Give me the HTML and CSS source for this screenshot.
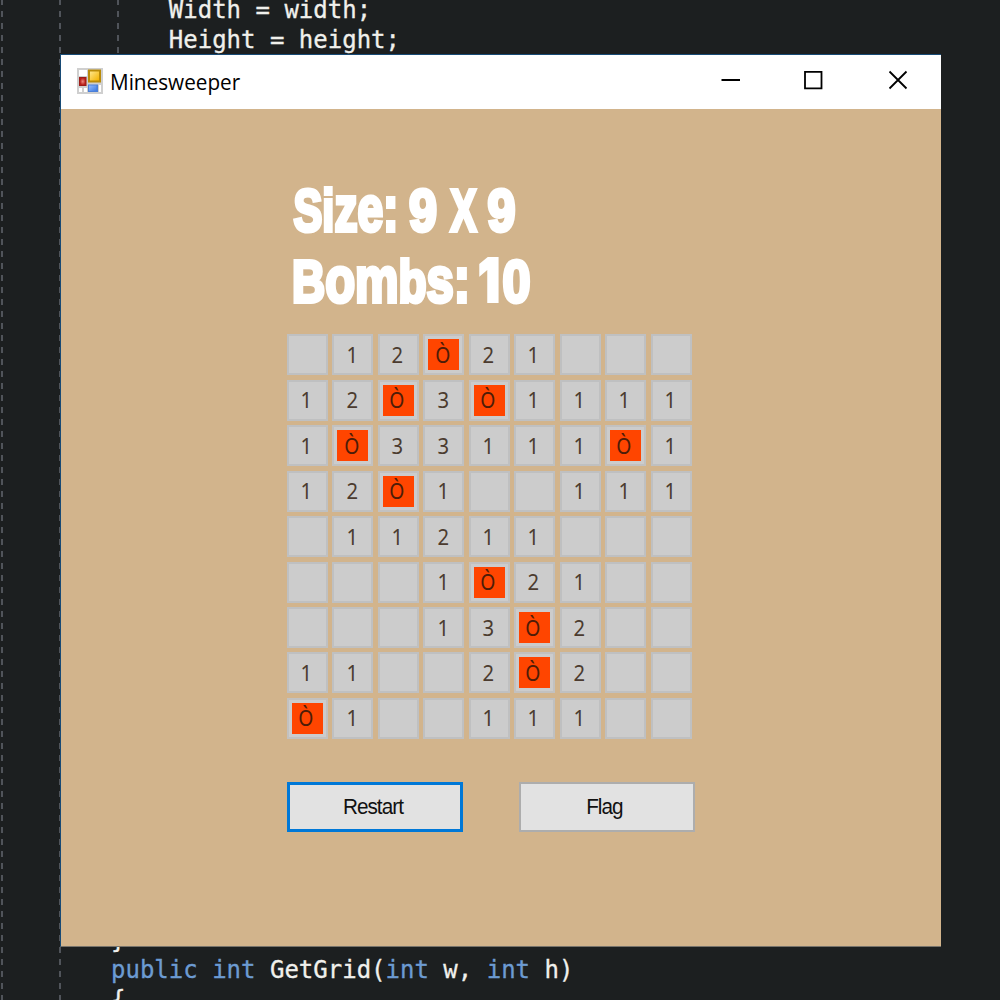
FILE: index.html
```
<!DOCTYPE html>
<html lang="en">
<head>
<meta charset="utf-8">
<title>Minesweeper</title>
<link rel="stylesheet" href="styles.css">
</head>
<body>
<div class="desktop">
  <div class="editor">
    <pre class="code code-top">    Width = width;
    Height = height;</pre>
    <pre class="code code-bottom">}
<span class="kw">public</span> <span class="kw">int</span> GetGrid(<span class="kw">int</span> w, <span class="kw">int</span> h)
{</pre>
    <i class="guide guide-1"></i><i class="guide guide-2"></i><i class="guide guide-3"></i>
  </div>
  <main class="window">
    <header class="titlebar">
      <svg class="app-icon" width="26" height="26" viewBox="0 0 26 26">
        <defs>
          <linearGradient id="gold" x1="0" y1="0" x2="1" y2="1"><stop offset="0" stop-color="#ffe68a"/><stop offset="1" stop-color="#f3b300"/></linearGradient>
          <radialGradient id="red"><stop offset="0" stop-color="#ef8a80"/><stop offset="1" stop-color="#b81f1a"/></radialGradient>
          <linearGradient id="blue" x1="0" y1="0" x2="1" y2="1"><stop offset="0" stop-color="#91b9ff"/><stop offset="1" stop-color="#3f7be0"/></linearGradient>
        </defs>
        <rect width="26" height="26" fill="#cfcfcf"/>
        <path fill="#fff" d="M2 2h8v6H2zM2 20h3v4H2zM7 20h3v4H7zM22 17h2v7h-2z"/>
        <rect x="11" y="1.500" width="13" height="13" fill="#b98b08"/>
        <rect x="13" y="3.500" width="9" height="9" fill="url(#gold)"/>
        <rect x="2" y="9" width="7.500" height="9" fill="#9c1c18"/>
        <rect x="3" y="10" width="5.500" height="7" fill="url(#red)"/>
        <rect x="11" y="16.500" width="10" height="7.500" fill="#4a7fd8"/>
        <rect x="12" y="17.500" width="7.500" height="5.500" fill="url(#blue)"/>
      </svg>
      <span class="title">Minesweeper</span>
      <svg class="controls" width="190" height="24" viewBox="0 0 190 24" fill="none" stroke="#000" stroke-width="1.800">
        <path d="M2.500 12H21M86 3.800h16.500v16.500H86zM170.500 3.500l17 17M187.500 3.500l-17 17"/>
      </svg>
    </header>
    <section class="client">
      <svg class="stats" width="250" height="130" viewBox="0 0 250 130" fill="#fff">
        <text x="6.500" y="53" textLength="105" lengthAdjust="spacingAndGlyphs">Si<tspan class="low">ze:</tspan></text>
        <text x="122" y="53" textLength="28" lengthAdjust="spacingAndGlyphs">9</text>
        <text x="163.500" y="53" textLength="26" lengthAdjust="spacingAndGlyphs">X</text>
        <text x="200.500" y="53" textLength="28" lengthAdjust="spacingAndGlyphs">9</text>
        <text x="5" y="124" textLength="178" lengthAdjust="spacingAndGlyphs">B<tspan class="low">om</tspan>b<tspan class="low">s:</tspan></text>
        <text class="one" x="191" y="123.500" textLength="22" lengthAdjust="spacingAndGlyphs">1</text>
        <text x="215.500" y="124" textLength="28" lengthAdjust="spacingAndGlyphs">0</text>
      </svg>
      <div class="board" id="board"></div>
      <div class="actions">
        <button class="btn btn-default"><span>Restart</span></button>
        <button class="btn"><span>Flag</span></button>
      </div>
    </section>
  </main>
</div>
<script src="board.js"></script>
</body>
</html>
```
FILE: board.js
```
const rows = [
  " 12*21   ",
  "12*3*1111",
  "1*33111*1",
  "12*1  111",
  " 11211   ",
  "   1*21  ",
  "   13*2  ",
  "11  2*2  ",
  "*1  111  "
];
const board = document.getElementById("board");
for (const row of rows) {
  for (const value of row) {
    const cell = document.createElement("div");
    cell.className = value === "*" ? "cell bomb" : "cell";
    const label = document.createElement("span");
    label.textContent = value === "*" ? "Ò" : value.trim();
    cell.append(label);
    board.append(cell);
  }
}
```
FILE: styles.css
```
* { box-sizing: border-box; }
body { margin: 0; }
.desktop {
  position: relative;
  width: 1000px;
  height: 1000px;
  overflow: hidden;
  background: #1c1f20;
}
.editor {
  height: 1000px;
  display: flex;
  flex-direction: column;
  justify-content: space-between;
}
.code {
  margin: 0;
  padding-left: 111px;
  font: 24px/30px "DejaVu Sans Mono", monospace;
  color: #f0f0ec;
  -webkit-text-stroke: 0.300px;
}
.code-top { margin-top: -5px; }
.code-bottom { margin-bottom: -15px; }
.kw { color: #6c9bd2; }
.guide {
  position: absolute;
  top: 0;
  width: 2px;
  height: 1000px;
  background: repeating-linear-gradient(#50545a 0 6px, transparent 6px 12px) 0 -1px / 2px 1020px;
}
.guide-1 { left: 1px; }
.guide-2 { left: 59px; }
.guide-3 { left: 117px; height: 54px; }
.window {
  position: absolute;
  left: 60px;
  top: 54px;
  width: 881px;
  height: 893px;
  background: #d2b48c;
  border: solid #174a75;
  border-width: 1px 0 1px 1px;
  border-bottom-color: #77736b;
}
.titlebar {
  display: flex;
  align-items: center;
  height: 54px;
  padding: 0 32px 2px 16px;
  background: #fff;
}
.title {
  margin: -1px 0 0 6.500px;
  font: 22px/30px "Open Sans", "Noto Sans", sans-serif;
  color: #000;
  transform: scaleX(0.942);
  transform-origin: left;
}
.controls { margin: -2px 0 0 auto; }
.client {
  display: flex;
  flex-direction: column;
  padding: 69px 0 0 226px;
}
.stats {
  display: block;
  font: bold 60px "Liberation Sans", sans-serif;
  stroke: #fff;
  stroke-width: 4px;
}
.low { font-size: 64px; }
.one {
  font: 900 60px "Inter", sans-serif;
  stroke-width: 2px;
}
.board {
  display: grid;
  grid-template-columns: repeat(9, 41px);
  grid-auto-rows: 41px;
  gap: 4.450px;
  margin-top: 26.400px;
}
.cell {
  display: flex;
  align-items: center;
  justify-content: center;
  border: 2px solid #bfc0c1;
  background: #ccc;
  font: 22px/30px "Noto Sans", sans-serif;
  color: #4b3b2f;
}
.cell span {
  transform: translate(-1px, -0.800px) scaleX(0.920);
}
.cell.bomb {
  border-color: #c2c1c0;
  background: linear-gradient(#ff4500, #ff4500) center / 31px 31px no-repeat #ccc;
  color: #4d1c08;
}
.cell.bomb span {
  font-size: 21px;
  transform: translate(-1.500px, 0) scaleX(0.920);
}
.actions {
  display: flex;
  gap: 56px;
  margin-top: 43px;
}
.btn {
  width: 176px;
  height: 50px;
  padding: 0 3px 0 0;
  border: 2px solid #adadad;
  background: #e2e2e2;
  font: 22px/30px "Liberation Sans", sans-serif;
  letter-spacing: -1px;
  color: #111;
}
.btn span {
  display: inline-block;
  transform: translateX(-1px) scaleX(0.940);
}
.btn-default { border: 3.500px solid #0078d7; }
```
